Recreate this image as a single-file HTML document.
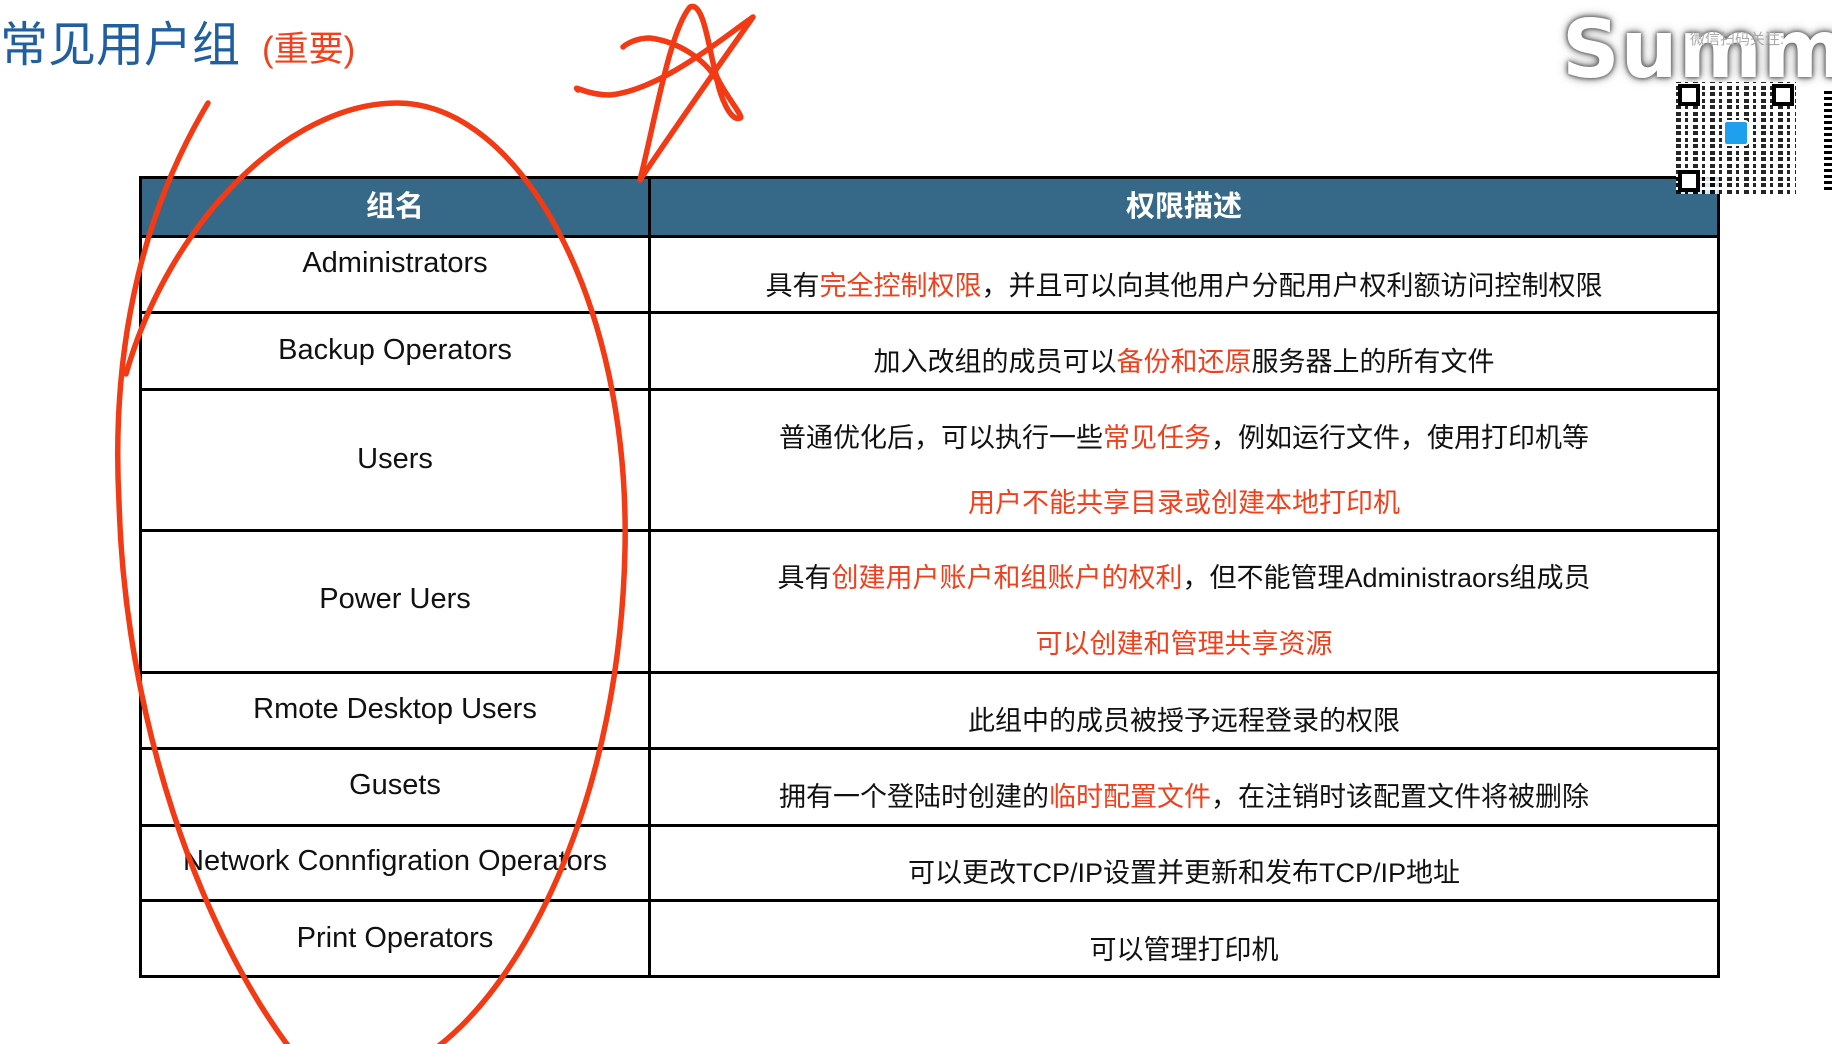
<!DOCTYPE html>
<html><head><meta charset="utf-8"><style>
*{margin:0;padding:0;box-sizing:border-box}
body{width:1832px;height:1044px;background:#fff;position:relative;overflow:hidden;font-family:"Liberation Sans","Noto Sans CJK SC",sans-serif;color:#111}
.t{position:absolute;white-space:nowrap;font-size:27px;line-height:30px;transform:translate(-50%,-50%)}
.l{font-size:29px}
.r{color:#f0401c}
.h{position:absolute;background:#000}
</style></head><body>
<div style="position:absolute;left:0;top:16px;font-size:48px;line-height:60px;color:#1f5fa0;font-family:'Liberation Sans','Noto Sans CJK SC',sans-serif">常见用户组<span style="font-size:35px;color:#f0401c;margin-left:22px">(重要)</span></div>

<div style="position:absolute;left:140px;top:177px;width:1580px;height:59px;background:#356987"></div>
<div class="t" style="left:395px;top:207px;color:#fff;font-weight:bold;font-size:29px">组名</div>
<div class="t" style="left:1184px;top:207px;color:#fff;font-weight:bold;font-size:29px">权限描述</div>

<div class="h" style="left:140px;top:176px;width:1580px;height:3px"></div>
<div class="h" style="left:140px;top:235px;width:1580px;height:3px"></div>
<div class="h" style="left:140px;top:311px;width:1580px;height:3px"></div>
<div class="h" style="left:140px;top:388px;width:1580px;height:3px"></div>
<div class="h" style="left:140px;top:529px;width:1580px;height:3px"></div>
<div class="h" style="left:140px;top:671px;width:1580px;height:3px"></div>
<div class="h" style="left:140px;top:747px;width:1580px;height:3px"></div>
<div class="h" style="left:140px;top:824px;width:1580px;height:3px"></div>
<div class="h" style="left:140px;top:899px;width:1580px;height:3px"></div>
<div class="h" style="left:140px;top:975px;width:1580px;height:3px"></div>
<div class="h" style="left:139px;top:176px;width:3px;height:802px"></div>
<div class="h" style="left:648px;top:176px;width:3px;height:802px"></div>
<div class="h" style="left:1717px;top:176px;width:3px;height:802px"></div>

<div class="t l" style="left:395px;top:263px">Administrators</div>
<div class="t l" style="left:395px;top:350px">Backup Operators</div>
<div class="t l" style="left:395px;top:459px">Users</div>
<div class="t l" style="left:395px;top:599px">Power Uers</div>
<div class="t l" style="left:395px;top:709px">Rmote Desktop Users</div>
<div class="t l" style="left:395px;top:785px">Gusets</div>
<div class="t l" style="left:395px;top:861px">Network Connfigration Operators</div>
<div class="t l" style="left:395px;top:938px">Print Operators</div>

<div class="t" style="left:1184px;top:286px">具有<span class="r">完全控制权限</span>，并且可以向其他用户分配用户权利额访问控制权限</div>
<div class="t" style="left:1184px;top:362px">加入改组的成员可以<span class="r">备份和还原</span>服务器上的所有文件</div>
<div class="t" style="left:1184px;top:438px">普通优化后，可以执行一些<span class="r">常见任务</span>，例如运行文件，使用打印机等</div>
<div class="t r" style="left:1184px;top:503px">用户不能共享目录或创建本地打印机</div>
<div class="t" style="left:1184px;top:578px">具有<span class="r">创建用户账户和组账户的权利</span>，但不能管理Administraors组成员</div>
<div class="t r" style="left:1184px;top:644px">可以创建和管理共享资源</div>
<div class="t" style="left:1184px;top:721px">此组中的成员被授予远程登录的权限</div>
<div class="t" style="left:1184px;top:797px">拥有一个登陆时创建的<span class="r">临时配置文件</span>，在注销时该配置文件将被删除</div>
<div class="t" style="left:1184px;top:873px">可以更改TCP/IP设置并更新和发布TCP/IP地址</div>
<div class="t" style="left:1184px;top:950px">可以管理打印机</div>

<div style="position:absolute;left:1562px;top:8px;font-size:80px;line-height:84px;font-weight:bold;color:#fff;font-family:'DejaVu Sans',sans-serif;letter-spacing:1px;text-shadow:0 0 6px #666,0 0 10px #777,0 0 3px #555">Summe</div>
<div style="position:absolute;left:1690px;top:28px;font-size:15px;color:#aaa">微信扫码关注:</div>
<div style="position:absolute;left:1676px;top:82px;width:120px;height:112px;background:
repeating-linear-gradient(90deg,#000 0 5px,#fff 5px 9px,#000 9px 12px,#fff 12px 17px),#fff;opacity:.85"></div>
<div style="position:absolute;left:1676px;top:82px;width:120px;height:112px;background:repeating-linear-gradient(0deg,transparent 0 4px,#fff 4px 7px,transparent 7px 11px,#fff 11px 13px)"></div>
<div style="position:absolute;left:1678px;top:84px;width:22px;height:22px;border:4px solid #000;background:#fff"></div>
<div style="position:absolute;left:1772px;top:84px;width:22px;height:22px;border:4px solid #000;background:#fff"></div>
<div style="position:absolute;left:1678px;top:170px;width:22px;height:22px;border:4px solid #000;background:#fff"></div>
<div style="position:absolute;left:1723px;top:120px;width:26px;height:26px;background:#1ea0ee;border-radius:4px;border:2px solid #fff"></div>
<div style="position:absolute;left:1824px;top:90px;width:8px;height:100px;background:repeating-linear-gradient(0deg,#000 0 3px,#fff 3px 6px)"></div>

<svg style="position:absolute;left:0;top:0" width="1832" height="1044" viewBox="0 0 1832 1044">
<g fill="none" stroke="#f23a14" stroke-width="5.5" stroke-linecap="round" stroke-linejoin="round">
<path d="M126,374 C170,220 290,103 397,103 C520,103 630,300 625,549 C620,790 530,980 432,1051"/>
<path d="M208,103 C150,200 110,330 119,502 C125,720 200,930 292,1051"/>
<path d="M578,90 C572,84 585,95 610,95 C660,90 720,40 753,17 C730,50 680,120 640,180 C655,120 670,30 690,7 C705,0 710,60 717,77 C725,95 745,118 740,118 C730,122 720,95 717,80 C705,60 680,42 650,38 C635,38 625,45 623,47"/>
</g></svg>
</body></html>
